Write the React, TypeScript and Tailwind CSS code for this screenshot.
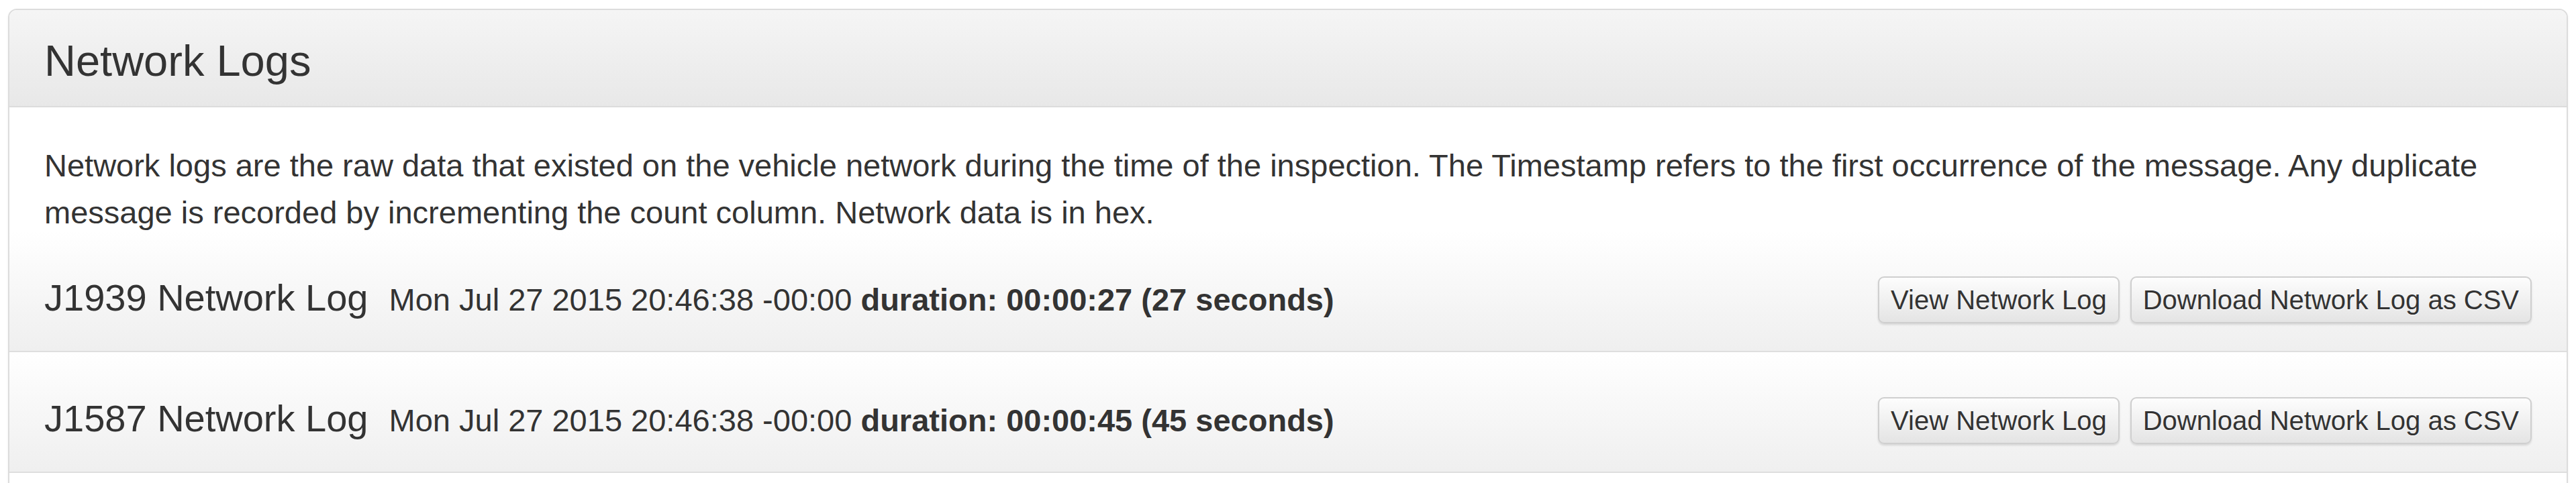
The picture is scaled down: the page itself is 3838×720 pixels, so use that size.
import React from "react";

interface NetworkLog {
    name: string;
    started: string;
    duration: string;
    seconds: number;
}

const logs: NetworkLog[] = [
    { name: "J1939 Network Log", started: "Mon Jul 27 2015 20:46:38 -00:00", duration: "00:00:27", seconds: 27 },
    { name: "J1587 Network Log", started: "Mon Jul 27 2015 20:46:38 -00:00", duration: "00:00:45", seconds: 45 },
];

function LogButton({ children }: { children: React.ReactNode }) {
    return (
        <button
            type="button"
            className="rounded-[9px] border-2 border-[#cfcfcf] bg-gradient-to-b from-[#fdfdfd] to-[#e4e4e4] px-[17px] py-[13px] text-[40px] leading-none text-[#333] shadow-[0_2px_3px_rgba(0,0,0,0.12)] [text-shadow:0_1px_0_#fff]"
        >
            {children}
        </button>
    );
}

export default function App() {
    return (
        <div className="min-h-[720px] bg-white pt-[13px] px-[12px] font-['Liberation_Sans',Arial,sans-serif] text-[#333]">
            <div className="overflow-hidden rounded-[13px] border-2 border-[#dcdcdc] bg-white shadow-[0_2px_4px_rgba(0,0,0,0.05)]">
                {/* Heading */}
                <div className="border-b-2 border-[#dcdcdc] bg-gradient-to-b from-[#f5f5f5] to-[#e8e8e8] pl-[52px] pr-[48px] pt-[43px] pb-[35px]">
                    <h3 className="text-[65px] leading-none font-normal">Network Logs</h3>
                </div>

                {/* Body */}
                <div className="pt-[52px] pb-[60px]">
                    <p className="-mb-[7px] pl-[52px] pr-[50px] text-[47px] leading-[70px]">
                        Network logs are the raw data that existed on the vehicle network during the time of the
                        inspection. The Timestamp refers to the first occurrence of the message. Any duplicate
                        message is recorded by incrementing the count column. Network data is in hex.
                    </p>

                    {logs.map((log) => (
                        <div
                            key={log.name}
                            className="flex h-[180px] items-start justify-between border-b-2 border-[#dedede] bg-gradient-to-b from-white to-[#efefef] pl-[52px] pr-[52px]"
                        >
                            <div className="flex items-baseline pt-[71px]">
                                <span className="text-[56px] leading-none">{log.name}</span>
                                <span className="ml-[31px] text-[47px] leading-none">
                                    {log.started}{" "}
                                    <b>
                                        duration: {log.duration} ({log.seconds} seconds)
                                    </b>
                                </span>
                            </div>
                            <div className="flex gap-[16px] pt-[67px]">
                                <LogButton>View Network Log</LogButton>
                                <LogButton>Download Network Log as CSV</LogButton>
                            </div>
                        </div>
                    ))}
                </div>
            </div>
        </div>
    );
}
